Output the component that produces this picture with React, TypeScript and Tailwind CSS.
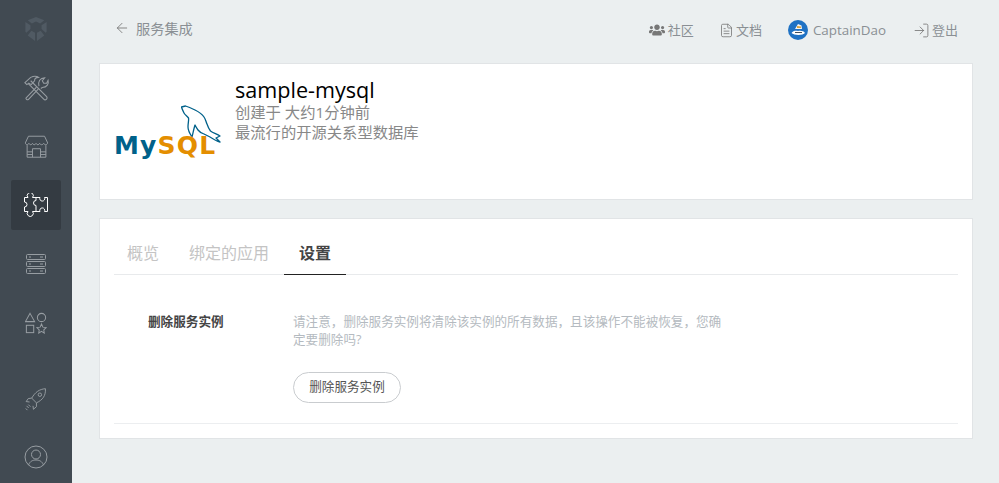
import React from 'react';
import { ArrowLeft, FileText, LogIn } from 'lucide-react';
import { FaUsers } from 'react-icons/fa';

const CJK = "font-['Open_Sans','Noto_Sans','Noto_Sans_CJK_SC',sans-serif]";

const iconProps = {
  viewBox: '0 0 28 28',
  fill: 'none',
  stroke: 'currentColor',
  strokeWidth: 1.1,
};

const CubeLogo = () => (
  <svg width="24" height="26" viewBox="0 0 26 28" fill="#505a63">
    <path d="M13 1 L4 4.5 L8.5 8 L13 6 L17.5 8 L22 4.5Z" />
    <path d="M1.5 6.5 L7 10 L7 14 L2.5 18 L1.5 17Z" />
    <path d="M24.5 6.5 L19 10 L19 14 L23.5 18 L24.5 17Z" />
    <path d="M8 16 L12 18 L12 27 L4 21 Z" />
    <path d="M18 16 L14 18 L14 27 L22 21 Z" />
  </svg>
);

const ToolsIcon = () => (
  <svg width="27" height="27" {...iconProps}>
    <path d="M8 7 L24.5 23.5 a1.6 1.6 0 0 1 -3 2.5 L5.5 10" />
    <path d="M2 9 L8 3.5 C11 2 14 2 16 3.5 C13 3.5 12 5 12 7 L8.5 11 L6 9.5 L4 11Z" />
    <path d="M3 25 L14 13.5 M5.5 26.5 L16 15.5 M3 25 a1.7 1.7 0 0 0 2.5 1.5" />
    <path d="M16.5 12.5 C15.5 8 17.5 4 22.5 4 L20 7 L21.5 9.5 L24.5 9.5 L26 6.5 C27 10 25 14 20 14 L18.5 15" />
  </svg>
);

const StoreIcon = () => (
  <svg width="25" height="25" {...iconProps}>
    <path d="M5 2.5 H23 L26.5 10 C26 12.5 23 12.5 22 10.5 C21 12.5 18.5 12.5 17.5 10.5 C16.5 12.5 14.5 12.5 13.5 10.5 C12.5 12.5 10.5 12.5 9.5 10.5 C8.5 12.5 6.5 12.5 5.5 10.5 C4.5 12.5 2 12.5 1.5 10 Z" />
    <path d="M3.5 12.5 V26 H24.5 V12.5 M3.5 20 H9.5 M18.5 20 H24.5 M3.5 23 H9.5 M18.5 23 H24.5" />
    <path d="M9.5 26 V16.5 H18.5 V26" />
  </svg>
);

const PuzzleIcon = () => (
  <svg width="24" height="24" viewBox="0 0 24 24" fill="none" stroke="currentColor" strokeWidth="1">
    <path d="M0.5 4.5 H4 A3 3 0 1 1 8.5 4.5 H12 V7.5 A2.5 2.5 0 1 0 12 12.5 V18.5 H8.5 A3 3 0 1 1 4 18.5 H0.5 V14 A2.5 2.5 0 1 0 0.5 9 Z" />
    <path d="M12 4.5 H16 A2.5 2.5 0 1 0 20.5 4.5 H23.5 V18.5 H20.5 A2.5 2.5 0 1 0 16 18.5 H12" />
  </svg>
);

const ServerIcon = () => (
  <svg width="22" height="22" viewBox="0 0 22 22" fill="none" stroke="currentColor" strokeWidth="1">
    <rect x="1.5" y="1.5" width="19" height="5" rx="1" />
    <rect x="1.5" y="8.5" width="19" height="5" rx="1" />
    <rect x="1.5" y="15.5" width="19" height="5" rx="1" />
    <path d="M4 4 H6 M4 11 H6 M4 18 H6 M15 4 H18 M15 11 H18 M15 18 H18" />
  </svg>
);

const ShapesIcon = () => (
  <svg width="22" height="22" viewBox="0 0 24 24" fill="none" stroke="currentColor" strokeWidth="1.1">
    <path d="M5.5 1.5 L10.5 10.5 H0.5 Z" />
    <circle cx="18" cy="6" r="4.5" />
    <rect x="1.5" y="14.5" width="8" height="8" />
    <path d="M18 13 L19.5 16.5 L23 17 L20.5 19.5 L21 23 L18 21.2 L15 23 L15.5 19.5 L13 17 L16.5 16.5 Z" />
  </svg>
);

const RocketIcon = () => (
  <svg width="24" height="24" {...iconProps}>
    <path d="M25 2 C18 2.5 13 6 9 13 L14.5 18.5 C22 15 25.5 10 25 2 Z" />
    <circle cx="18.5" cy="9" r="2" />
    <path d="M9 13 L5 13.5 L2.5 17 L6.5 17.5 M14.5 18.5 L14.5 23 L11 26 L10.5 22" />
    <path d="M3 22 L5.5 24.5 M5 20.5 L7.5 23 M2 25 L4 27" />
  </svg>
);

const UserIcon = () => (
  <svg width="24" height="24" viewBox="0 0 24 24" fill="none" stroke="currentColor" strokeWidth="1">
    <circle cx="12" cy="12" r="11" />
    <circle cx="12" cy="9.5" r="4.5" />
    <path d="M4.5 20 C6 16 9 15 12 15 C15 15 18 16 19.5 20" />
  </svg>
);

const Dolphin = () => (
  <svg width="40" height="38" viewBox="0 0 40 38" fill="none" stroke="#00618a" strokeWidth="1.3" strokeLinejoin="round">
    <path d="M0.5 2 L4.5 1 C8 2 11 3.5 14 5 C18 7 21 9 23 12 C25 15 25 17 26 19 C27 22 28 24 29.5 26 C32 28 36 29 39 31 L35 33 L39 37 C35 36 32 34 29 32 C27 31 25 30 23 29 C20 28 18.5 27 17 25 C15.5 23 14.5 21 14 20 C13 23 12 28 11 32 C9 29 7 26 7 22 C7 18 8 15 7.5 13 C6 11 4 10 3 8 C2 6 1 4 0.5 2 Z" />
  </svg>
);

const MySqlLogo = () => (
  <div className="relative h-[64px] w-[104px] shrink-0">
    <div className="absolute left-[66px] top-[5px]">
      <Dolphin />
    </div>
    <div className="absolute left-[-1px] top-[31px] whitespace-nowrap font-['DejaVu_Sans',sans-serif] text-[25px] font-bold leading-[30px] tracking-[1.2px]">
      <span className="text-[#00618a]">My</span>
      <span className="text-[#e48e00]">SQL</span>
    </div>
  </div>
);

const Avatar = () => (
  <svg width="20" height="20" viewBox="0 0 20 20">
    <circle cx="10" cy="10" r="10" fill="#1f72c4" />
    <path d="M7 9 L10 4 L13.5 5.5 L14 9 Z" fill="#f5f5f5" />
    <path d="M9 6 L13 6.5 L13 8 L9 8 Z" fill="#d9a441" />
    <path d="M3.5 13 C5 10.5 8 10.5 10 11 C13 10.5 16 11 17 13 C15 15.5 6 15.5 3.5 13 Z" fill="#ffffff" />
    <path d="M7 12.5 H14" stroke="#44505c" strokeWidth="1" />
  </svg>
);

const sideItems = [
  <ToolsIcon key="tools" />,
  <StoreIcon key="store" />,
  <PuzzleIcon key="puzzle" />,
  <ServerIcon key="server" />,
  <ShapesIcon key="shapes" />,
];

const Sidebar = () => (
  <aside className="flex w-[72px] shrink-0 flex-col items-center bg-[#414a52] pt-[4px] text-[#979da2]">
    <div className="flex h-[50px] w-[50px] items-center justify-center">
      <CubeLogo />
    </div>
    {sideItems.map((icon, index) => (
      <div
        key={index}
        className={
          index === 2
            ? 'mt-[8.75px] flex h-[50px] w-[50px] items-center justify-center rounded-[2px] bg-[#343b42] text-white'
            : 'mt-[8.75px] flex h-[50px] w-[50px] items-center justify-center'
        }
      >
        {icon}
      </div>
    ))}
    <div className="mt-[26px] flex h-[50px] w-[50px] items-center justify-center">
      <RocketIcon />
    </div>
    <div className="mt-[8px] flex h-[50px] w-[50px] items-center justify-center">
      <UserIcon />
    </div>
  </aside>
);

const TopBar = () => (
  <header className="flex h-[63px] items-center justify-between pb-[6px] pl-[15px] pr-[15px] text-[14.2px] text-[#8a8f94]">
    <div className="flex items-center gap-[6px]">
      <ArrowLeft size={16} strokeWidth={1.3} className="text-[#777]" />
      <span>服务集成</span>
    </div>
    <nav className="mt-[4px] flex items-center text-[13px]">
      <span className="flex items-center gap-[3px]">
        <FaUsers size={16} className="text-[#777]" />
        社区
      </span>
      <span className="ml-[25px] flex items-center gap-[2px]">
        <FileText size={15} strokeWidth={1.3} className="text-[#777]" />
        文档
      </span>
      <span className="ml-[26px] flex items-center gap-[5px] text-[13.4px]">
        <Avatar />
        CaptainDao
      </span>
      <span className="ml-[27px] flex items-center gap-[2px]">
        <LogIn size={17} strokeWidth={1.2} className="text-[#777]" />
        登出
      </span>
    </nav>
  </header>
);

const Summary = () => (
  <section className="flex h-[137px] border border-[#e1e4e6] bg-white pl-[15px] pt-[13px]">
    <div className="mt-[23px]">
      <MySqlLogo />
    </div>
    <div className="ml-[16px]">
      <h1 className="text-[21.6px] leading-[25px] text-black">sample-mysql</h1>
      <p className="text-[15.3px] leading-[20px] text-[#888]">创建于 大约1分钟前</p>
      <p className="text-[15.3px] leading-[20px] text-[#888]">最流行的开源关系型数据库</p>
    </div>
  </section>
);

const Settings = () => (
  <section className="h-[221px] border border-[#e1e4e6] bg-white px-[14px]">
    <div className="flex h-[56px] items-end border-b border-[#e8eaec] text-[16px] text-[#c4c4c4]">
      <span className="flex h-[43px] items-center pl-[13px] pr-[15px]">概览</span>
      <span className="flex h-[43px] items-center px-[15px]">绑定的应用</span>
      <span className="-mb-px flex h-[44px] items-center border-b border-[#222] px-[15px] font-bold text-[#444]">设置</span>
    </div>
    <div className="flex h-[149px] border-b border-[#eceef0] pt-[38px]">
      <div className="w-[179px] pl-[34px] text-[12.6px] font-bold leading-[18px] text-[#444]">删除服务实例</div>
      <div>
        <p className="w-[436px] text-[12.6px] leading-[18px] text-[#b4bac0]">
          请注意，删除服务实例将清除该实例的所有数据，且该操作不能被恢复，您确定要删除吗?
        </p>
        <button className="mt-[23px] h-[31px] w-[108px] rounded-full border border-[#c9cccf] bg-white text-[12.6px] text-[#555]">
          删除服务实例
        </button>
      </div>
    </div>
  </section>
);

export default function App() {
  return (
    <div className={`flex h-[483px] w-[999px] overflow-hidden bg-[#ebeff0] ${CJK}`}>
      <Sidebar />
      <main className="flex-1 pl-[27px] pr-[26px]">
        <TopBar />
        <Summary />
        <div className="mt-[18px]">
          <Settings />
        </div>
      </main>
    </div>
  );
}
